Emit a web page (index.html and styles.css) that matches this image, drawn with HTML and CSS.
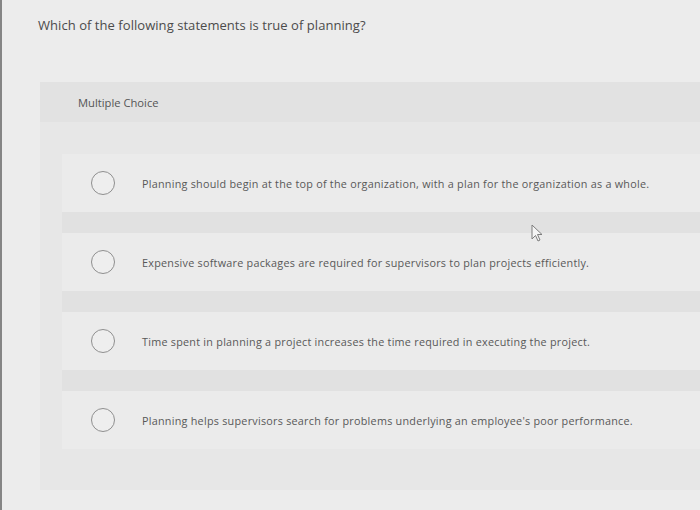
FILE: index.html
```html
<!DOCTYPE html>
<html lang="en">
<head>
<meta charset="utf-8">
<title>Multiple Choice</title>
<link rel="stylesheet" href="styles.css">
</head>
<body>
<main class="frame">
  <h1 class="question">Which of the following statements is true of planning?</h1>
  <section class="card">
    <header class="card-head">Multiple Choice</header>
    <div class="options">
      <label class="option"><span class="radio"></span><span class="opt-text">Planning should begin at the top of the organization, with a plan for the organization as a whole.</span></label>
      <div class="sep"></div>
      <label class="option"><span class="radio"></span><span class="opt-text">Expensive software packages are required for supervisors to plan projects efficiently.</span></label>
      <div class="sep"></div>
      <label class="option"><span class="radio"></span><span class="opt-text">Time spent in planning a project increases the time required in executing the project.</span></label>
      <div class="sep"></div>
      <label class="option"><span class="radio"></span><span class="opt-text">Planning helps supervisors search for problems underlying an employee's poor performance.</span></label>
    </div>
  </section>
  <svg class="cursor" width="14" height="20" viewBox="0 0 14 20"><path d="M1 1 L1 15 L4.5 11.5 L7 17 L9 16 L6.5 10.5 L11 10.5 Z" fill="#f4f4f4" stroke="#7d7d7d" stroke-width="1" stroke-linejoin="round"/></svg>
</main>
</body>
</html>
```
FILE: styles.css
```css
html, body {
  margin: 0;
  padding: 0;
}
body {
  width: 700px;
  height: 510px;
  overflow: hidden;
  background: #e9e9e9;
  font-family: "Open Sans", "Lato", sans-serif;
}
.frame {
  position: relative;
  height: 510px;
  box-sizing: border-box;
  border-left: 2px solid #858585;
  background: #ececec;
}
.question {
  margin: 0;
  padding: 16px 0 0 36px;
  height: 82px;
  box-sizing: border-box;
  font-size: 13px;
  line-height: 18px;
  font-weight: 400;
  color: #4b4b4b;
  letter-spacing: 0.05px;
}
.card {
  margin-left: 38px;
  background: #e7e7e7;
  height: 408px;
  display: flex;
  flex-direction: column;
}
.card-head {
  height: 40px;
  display: flex;
  align-items: center;
  padding-left: 38px;
  background: #e2e2e2;
  font-size: 11.2px;
  color: #555;
}
.options {
  margin-left: 22px;
  padding-top: 32px;
  display: flex;
  flex-direction: column;
}
.option {
  height: 58px;
  display: flex;
  align-items: center;
  background: #ebebeb;
  padding-left: 29px;
  gap: 27px;
}
.sep {
  height: 21px;
  background: #e1e1e1;
}
.radio {
  width: 22px;
  height: 22px;
  border-radius: 50%;
  border: 1px solid #8f8f8f;
  background: #eeeeee;
  flex: none;
}
.opt-text {
  font-size: 10.8px;
  letter-spacing: 0.25px;
  color: #585858;
}
.cursor {
  position: absolute;
  left: 529px;
  top: 224px;
}
```
